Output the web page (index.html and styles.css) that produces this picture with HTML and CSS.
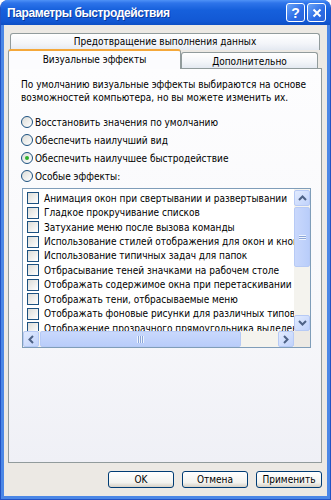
FILE: index.html
```html
<!DOCTYPE html>
<html lang="ru">
<head>
  <meta charset="UTF-8">
  <title>Параметры быстродействия</title>
  <link rel="stylesheet" href="styles.css">
</head>
<body>
  <div class="window">
    <div class="titlebar">
      <span class="title">Параметры быстродействия</span>
      <div class="title-buttons">
        <span class="tbtn help">?</span>
        <span class="tbtn">
          <svg width="10" height="10" viewBox="0 0 10 10"><path d="M1.5 1.5 L8.5 8.5 M8.5 1.5 L1.5 8.5" stroke="#fff" stroke-width="2"/></svg>
        </span>
      </div>
    </div>

    <div class="client">
      <div class="tabs">
        <div class="tab-row back">
          <div class="tab wide">Предотвращение выполнения данных</div>
        </div>
        <div class="tab-row front">
          <div class="tab active">Визуальные эффекты</div>
          <div class="tab other">Дополнительно</div>
        </div>
      </div>

      <div class="panel">
        <p class="intro">По умолчанию визуальные эффекты выбираются на основе<br>возможностей компьютера, но вы можете изменить их.</p>

        <div class="options">
          <div class="radio"><span class="rb"></span>Восстановить значения по умолчанию</div>
          <div class="radio"><span class="rb"></span>Обеспечить наилучший вид</div>
          <div class="radio"><span class="rb checked"></span>Обеспечить наилучшее быстродействие</div>
          <div class="radio"><span class="rb"></span>Особые эффекты:</div>
        </div>

        <div class="listbox">
          <ul class="items">
            <li><span class="cb"></span>Анимация окон при свертывании и развертывании</li>
            <li><span class="cb"></span>Гладкое прокручивание списков</li>
            <li><span class="cb"></span>Затухание меню после вызова команды</li>
            <li><span class="cb"></span>Использование стилей отображения для окон и кнопок</li>
            <li><span class="cb"></span>Использование типичных задач для папок</li>
            <li><span class="cb"></span>Отбрасывание теней значками на рабочем столе</li>
            <li><span class="cb"></span>Отображать содержимое окна при перетаскивании</li>
            <li><span class="cb"></span>Отображать тени, отбрасываемые меню</li>
            <li><span class="cb"></span>Отображать фоновые рисунки для различных типов папок</li>
            <li><span class="cb"></span>Отображение прозрачного прямоугольника выделения</li>
          </ul>

          <div class="vscroll">
            <span class="sbtn">
              <svg width="9" height="6" viewBox="0 0 9 6"><path d="M1 5 L4.5 1.5 L8 5" fill="none" stroke="#4d6185" stroke-width="2"/></svg>
            </span>
            <div class="vtrack">
              <div class="vthumb"><span class="grip-h"></span></div>
            </div>
            <span class="sbtn">
              <svg width="9" height="6" viewBox="0 0 9 6"><path d="M1 1 L4.5 4.5 L8 1" fill="none" stroke="#4d6185" stroke-width="2"/></svg>
            </span>
          </div>

          <div class="hscroll">
            <span class="sbtn">
              <svg width="6" height="9" viewBox="0 0 6 9"><path d="M5 1 L1.5 4.5 L5 8" fill="none" stroke="#4d6185" stroke-width="2"/></svg>
            </span>
            <div class="htrack">
              <div class="hthumb"><span class="grip-v"></span></div>
            </div>
            <span class="sbtn">
              <svg width="6" height="9" viewBox="0 0 6 9"><path d="M1 1 L4.5 4.5 L1 8" fill="none" stroke="#4d6185" stroke-width="2"/></svg>
            </span>
          </div>

          <div class="corner"></div>
        </div>
      </div>

      <div class="buttons">
        <button class="btn">OK</button>
        <button class="btn">Отмена</button>
        <button class="btn">Применить</button>
      </div>
    </div>
  </div>
</body>
</html>
```

FILE: styles.css
```css
body {
  margin: 0;
  font-family: "DejaVu Sans Condensed", "DejaVu Sans", sans-serif;
  font-size: 10px;
  color: #000;
  background: #fff;
}

.window {
  width: 331px;
  height: 500px;
  box-sizing: border-box;
  display: flex;
  flex-direction: column;
  background: #4b87e6;
  border: 1px solid #2253c4;
  border-top: none;
  border-radius: 8px 8px 0 0;
  overflow: hidden;
}

/* title bar */
.titlebar {
  height: 25px;
  flex: none;
  display: flex;
  align-items: center;
  justify-content: space-between;
  padding: 0 4px 0 6px;
  background: linear-gradient(#4f92f7 0%, #2e74ea 12%, #1660dc 40%, #1258d4 85%, #0e4fc4 100%);
}
.title {
  color: #fff;
  font-family: "Liberation Sans", Arial, sans-serif;
  font-weight: bold;
  font-size: 12px;
  letter-spacing: -0.4px;
  text-shadow: 1px 1px 0 #0b3a9c;
}
.title-buttons {
  display: flex;
  gap: 2px;
}
.tbtn {
  width: 17px;
  height: 17px;
  display: flex;
  align-items: center;
  justify-content: center;
  border: 1px solid #fff;
  border-radius: 3px;
  background: linear-gradient(135deg, #6aa3f7, #2b6ce6 60%, #2a63d8);
  color: #fff;
  font-family: "Liberation Sans", Arial, sans-serif;
  font-weight: bold;
  font-size: 14px;
}

/* client area */
.client {
  flex: 1;
  margin: 0 3px 3px;
  background: #ece9e4;
  display: flex;
  flex-direction: column;
  padding: 8px 4px 8px;
}

/* tabs */
.tab-row {
  display: flex;
}
.tab {
  box-sizing: border-box;
  border: 1px solid #919b9c;
  border-bottom: none;
  border-radius: 3px 3px 0 0;
  background: linear-gradient(#ffffff, #f3f5f9 60%, #e4e9f1);
  text-align: center;
}
.tab-row.back .tab.wide {
  margin-left: 2px;
  width: 310px;
  height: 17px;
  line-height: 16px;
}
.tab-row.front {
  height: 19px;
  margin-top: -1px;
  align-items: flex-end;
}
.tab.active {
  width: 173px;
  height: 20px;
  line-height: 17px;
  margin-bottom: -1px;
  position: relative;
  z-index: 1;
  background: #fcfcfe;
  border-top: 2px solid #f5a83a;
}
.tab.other {
  width: 137px;
  height: 16px;
  line-height: 17px;
}

/* tab page */
.panel {
  box-sizing: border-box;
  width: 314px;
  height: 395px;
  border: 1px solid #919b9c;
  background: linear-gradient(#fdfdfe, #f8f8fb 60%, #eff0f6);
  padding: 9px 11px 0 12px;
}
.intro {
  margin: 0;
  line-height: 13px;
}

.options {
  margin-top: 9px;
  display: flex;
  flex-direction: column;
}
.radio {
  display: flex;
  align-items: center;
  height: 18px;
}
.rb {
  box-sizing: border-box;
  width: 12px;
  height: 12px;
  margin-right: 2px;
  border: 1px solid #1c5180;
  border-radius: 50%;
  background: linear-gradient(135deg, #dcdcd7, #ffffff);
  display: flex;
  align-items: center;
  justify-content: center;
}
.rb.checked::after {
  content: "";
  width: 4px;
  height: 4px;
  border-radius: 50%;
  background: #2cb02c;
}

/* list */
.listbox {
  box-sizing: border-box;
  margin-top: 3px;
  margin-left: 1px;
  width: 289px;
  height: 160px;
  border: 1px solid #7f9db9;
  background: #fff;
  display: grid;
  grid-template-columns: 1fr 16px;
  grid-template-rows: 1fr 16px;
}
.items {
  list-style: none;
  margin: 0;
  padding: 2px 0 0 4px;
  overflow: hidden;
  white-space: nowrap;
}
.items li {
  display: flex;
  align-items: center;
  height: 14.45px;
}
.cb {
  box-sizing: border-box;
  flex: none;
  width: 12px;
  height: 12px;
  margin-right: 5px;
  border: 1px solid #1c5180;
  background: linear-gradient(135deg, #dcdcd7, #ffffff);
}

/* scrollbars */
.vscroll {
  display: flex;
  flex-direction: column;
  background: #f4f3ee;
  padding-top: 1px;
}
.hscroll {
  display: flex;
  background: #f4f3ee;
}
.corner {
  background: #ece9e4;
}
.sbtn {
  box-sizing: border-box;
  flex: none;
  width: 16px;
  height: 16px;
  display: flex;
  align-items: center;
  justify-content: center;
  border: 1px solid #b7caf5;
  border-radius: 2px;
  background: linear-gradient(135deg, #e2ebfe, #c0d2fb);
}
.vtrack {
  flex: 1;
  padding-top: 1px;
}
.vthumb {
  box-sizing: border-box;
  height: 60px;
  border: 1px solid #b7caf5;
  border-radius: 2px;
  background: linear-gradient(90deg, #c9d8fc, #b9cdfa);
  display: flex;
  align-items: center;
  justify-content: center;
}
.grip-h {
  width: 7px;
  height: 5px;
  background: repeating-linear-gradient(#eef4fe 0 1px, #8ca6d8 1px 2px);
}
.htrack {
  flex: 1;
  padding-left: 1px;
}
.hthumb {
  box-sizing: border-box;
  width: 201px;
  height: 16px;
  border: 1px solid #b7caf5;
  border-radius: 2px;
  background: linear-gradient(#c9d8fc, #b9cdfa);
  display: flex;
  align-items: center;
  justify-content: center;
}
.grip-v {
  width: 7px;
  height: 7px;
  background: repeating-linear-gradient(90deg, #eef4fe 0 1px, #8ca6d8 1px 2px);
}

/* dialog buttons */
.buttons {
  display: flex;
  justify-content: flex-end;
  gap: 8px;
  margin-top: 8px;
  width: 314px;
}
.btn {
  box-sizing: border-box;
  width: 66px;
  height: 17px;
  padding: 0;
  font-family: "DejaVu Sans Condensed", "DejaVu Sans", sans-serif;
  font-size: 10px;
  color: #000;
  border: 1px solid #003c74;
  border-radius: 3px;
  background: linear-gradient(#ffffff, #f3f3ef 70%, #d6d0c5);
}
```
